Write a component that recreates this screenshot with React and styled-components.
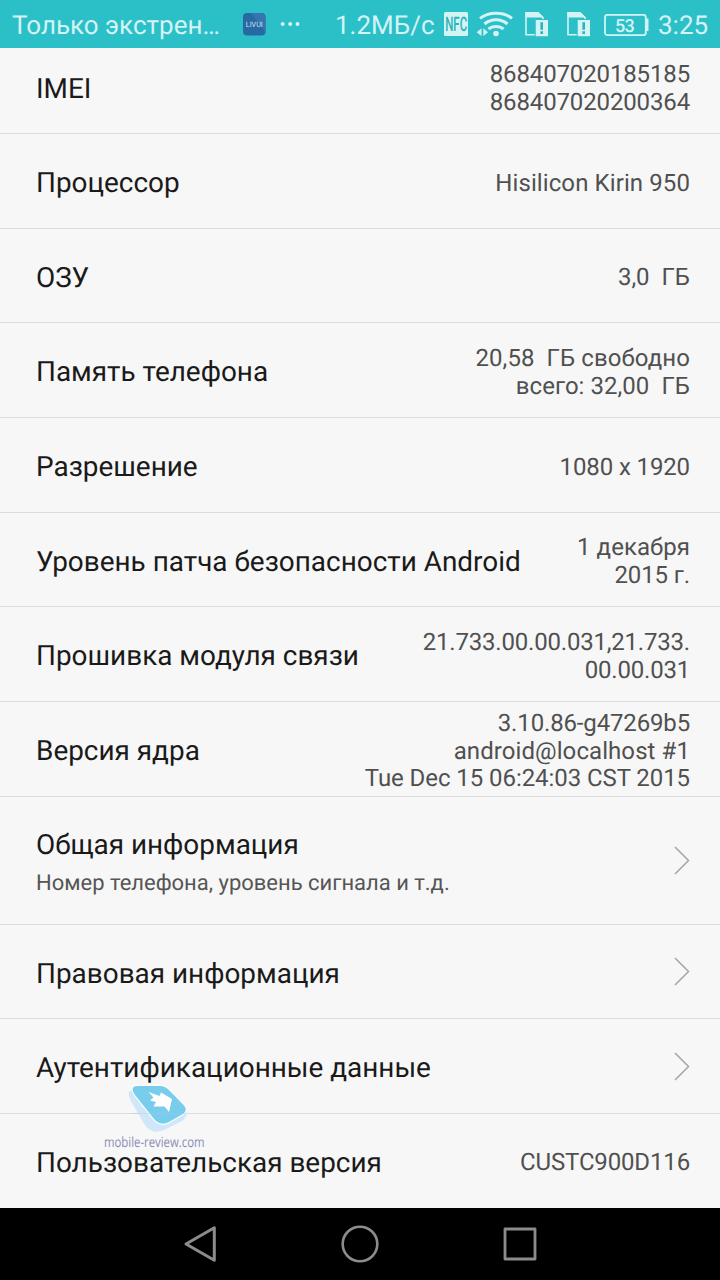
import React from 'react';
import styled, { createGlobalStyle } from 'styled-components';

const GlobalStyle = createGlobalStyle`
  * {
    box-sizing: border-box;
  }

  body {
    margin: 0;
    background: #f7f7f7;
    font-family: Roboto, 'Noto Sans', sans-serif;
    text-rendering: geometricPrecision;
  }
`;

const Screen = styled.div`
  position: relative;
  display: flex;
  flex-direction: column;
  width: 720px;
  height: 1280px;
  overflow: hidden;
  background: #f7f7f7;
`;

const StatusBar = styled.header`
  display: flex;
  align-items: center;
  flex: none;
  height: 48px;
  padding-left: 12px;
  background: #2bc0c8;
  color: #d3f3f5;
  font-size: 26px;
  line-height: 46px;
  white-space: pre;

  svg {
    display: block;
    flex: none;
    overflow: visible;
  }
`;

const StatusText = styled.span`
  flex: none;
  width: ${props => props.$width}px;
  padding-top: 4px;
`;

const List = styled.main`
  flex: none;
  height: 1160px;
`;

const Row = styled.div`
  display: flex;
  align-items: center;
  justify-content: space-between;
  height: ${props => props.$height || 94.667}px;
  padding: 0 30px ${props => props.$bottom || 0}px 36px;
  border-bottom: 1px solid ${props => (props.$last ? 'transparent' : '#dcdcdc')};

  svg {
    margin-top: 1px;
  }
`;

const Label = styled.div`
  padding-top: 4.4px;
  color: #1a1a1a;
  font-size: 27.92px;
  line-height: 34px;
  white-space: nowrap;
`;

const Summary = styled.div`
  margin-top: 8px;
  margin-bottom: -1px;
  color: #555;
  font-size: 21.97px;
  line-height: 28px;
`;

const Value = styled.div`
  padding-top: 5.4px;
  color: #505050;
  font-size: 24px;
  line-height: 27.8px;
  text-align: right;
  white-space: pre;
`;

const Line = styled.div`
  letter-spacing: ${props => props.$spacing || 0}px;
`;

const NavBar = styled.footer`
  display: flex;
  justify-content: center;
  align-items: center;
  gap: 120px;
  flex: none;
  height: 72px;
  background: #000;
`;

const Watermark = styled.div`
  position: absolute;
  left: 100px;
  top: 1082px;
  width: 110px;

  svg {
    display: block;
    overflow: visible;
  }
`;

// value: list of [text, letter spacing]
const rows = [
  { label: 'IMEI', value: [['868407020185185', -0.14], ['868407020200364', -0.14]], height: 86, bottom: 8 },
  { label: 'Процессор', value: [['Hisilicon Kirin 950', 0.1]] },
  { label: 'ОЗУ', value: [['3,0  ГБ']] },
  { label: 'Память телефона', value: [['20,58  ГБ свободно', 0.08], ['всего: 32,00  ГБ', 0.05]] },
  { label: 'Разрешение', value: [['1080 x 1920', -0.12]] },
  { label: 'Уровень патча безопасности Android', value: [['1 декабря', 0.06], ['2015 г.', -0.1]] },
  { label: 'Прошивка модуля связи', value: [['21.733.00.00.031,21.733.', -0.2], ['00.00.031', -0.2]] },
  {
    label: 'Версия ядра',
    value: [['3.10.86-g47269b5', -0.15], ['android@localhost #1', 0.08], ['Tue Dec 15 06:24:03 CST 2015', -0.07]],
  },
  { label: 'Общая информация', summary: 'Номер телефона, уровень сигнала и т.д.', height: 128, link: true },
  { label: 'Правовая информация', link: true },
  { label: 'Аутентификационные данные', link: true },
  { label: 'Пользовательская версия', value: [['CUSTC900D116', -0.15]], height: 94.333 },
];

const Chevron = () => (
  <svg width="18" height="30" viewBox="0 0 18 30" fill="none" stroke="#a6a6a6" strokeWidth="1.5">
    <path d="M3 1 16.5 14.5 3 28" />
  </svg>
);

// Launcher notification, the overflow dots follow it
const AppNotification = () => (
  <svg width="92" height="48" viewBox="0 0 92 48">
    <rect x="0" y="13" width="22.5" height="22.5" rx="4" fill="#2869a3" />
    <path d="M8 13h10.5a4 4 0 0 1 4 4v15Z" fill="#3576ae" />
    <text x="2.8" y="27.3" fill="#c7e5f5" fontSize="7.5" textLength="17" lengthAdjust="spacingAndGlyphs">LIVUI</text>
    <g fill="#d3f3f5">
      <circle cx="39.7" cy="24" r="2" />
      <circle cx="47.2" cy="24" r="2" />
      <circle cx="54.5" cy="24" r="2" />
    </g>
  </svg>
);

const NfcIcon = () => (
  <svg width="33" height="48" viewBox="0 0 33 48">
    <rect x="0" y="12" width="24" height="24" rx="1.5" fill="#d3f3f5" />
    <text x="1.2" y="31.3" fill="#2bb3bb" fontSize="20" fontWeight="500" textLength="22" lengthAdjust="spacingAndGlyphs">NFC</text>
  </svg>
);

const WifiIcon = () => (
  <svg width="48" height="48" viewBox="477 0 48 48" fill="none" stroke="#d3f3f5" strokeWidth="3">
    <path d="M480 18.5C488 11.4 504 11.4 512 18.5" />
    <path d="M484.5 24C491 18.3 501 18.3 507.5 24" />
    <path d="M488.5 29.2C492.5 25.6 499.5 25.6 503.5 29.2" />
    <circle cx="496" cy="33.5" r="2.8" fill="#d3f3f5" stroke="none" />
    <path d="M476.7 32.2 481.5 28.3V36ZM488 32.2 483.3 28.3V36Z" fill="#d3f3f5" stroke="none" />
  </svg>
);

const SimIcon = ({ width }) => (
  <svg width={width} height="48" viewBox={`0 0 ${width} 48`}>
    <path d="M1 12.8H13L18 17.5V34.7H1Z" fill="none" stroke="#d3f3f5" strokeWidth="1.6" />
    <path d="M.5 12H13.2L18.5 17.5H.5Z" fill="#d3f3f5" />
    <path d="M10.2 19.5H23.5V36.8H10.2Z" fill="#d3f3f5" stroke="#2bc0c8" strokeWidth="1" />
    <path d="M16.7 22.3V29.8M16.7 31.3V34" stroke="#2bb3bb" strokeWidth="2.6" />
  </svg>
);

const BatteryIcon = () => (
  <svg width="54" height="48" viewBox="0 0 54 48">
    <rect x="1" y="14.8" width="40.8" height="20.4" rx="2.5" fill="none" stroke="#d3f3f5" strokeWidth="1.8" />
    <path d="M42 18.5h2.5v12.5H42Z" fill="#d3f3f5" />
    <text x="11" y="31.5" fill="#d3f3f5" fontSize="18" fontWeight="500" textLength="19.8">53</text>
  </svg>
);

const BackIcon = () => (
  <svg width="40" height="40" viewBox="0 0 40 40" fill="none" stroke="#8c8c8c" strokeWidth="3" strokeLinejoin="round">
    <path d="M34.3 3.8V36.2L6 20Z" />
  </svg>
);

const HomeIcon = () => (
  <svg width="40" height="40" viewBox="0 0 40 40" fill="none" stroke="#8c8c8c" strokeWidth="2.6">
    <circle cx="20" cy="20" r="17.3" />
  </svg>
);

const RecentIcon = () => (
  <svg width="40" height="40" viewBox="0 0 40 40" fill="none" stroke="#8c8c8c" strokeWidth="2.8" strokeLinejoin="round">
    <path d="M5 5H35V35H5Z" />
  </svg>
);

const App = () => {
  return (
    <>
      <GlobalStyle />
      <Screen>
        <StatusBar>
          <StatusText $width={231}>Только экстрен…</StatusText>
          <AppNotification />
          <StatusText $width={109}>1.2МБ/с</StatusText>
          <NfcIcon />
          <WifiIcon />
          <SimIcon width={42} />
          <SimIcon width={37} />
          <BatteryIcon />
          <StatusText $width={56}>3:25</StatusText>
        </StatusBar>
        <List>
          {rows.map((row, i) => (
            <Row key={row.label} $height={row.height} $bottom={row.bottom} $last={i === rows.length - 1}>
              <Label>
                {row.label}
                {row.summary && <Summary>{row.summary}</Summary>}
              </Label>
              {row.value && (
                <Value>
                  {row.value.map(([text, spacing]) => (
                    <Line key={text} $spacing={spacing}>{text}</Line>
                  ))}
                </Value>
              )}
              {row.link && <Chevron />}
            </Row>
          ))}
        </List>
        <NavBar>
          <BackIcon />
          <HomeIcon />
          <RecentIcon />
        </NavBar>
        <Watermark>
          <svg width="110" height="72" viewBox="0 0 110 72">
            <path d="M29 9Q28 14 31 19L43 40Q51 54 64 48L82 39Q88 35 86 28L40 8Z" fill="#cfe7f8" />
            <path d="M38 4H60Q65 4 69 8L84 23.5Q88 28 83 32L68 40.5Q60 44 54 37L35 13Q29 4 38 4Z" fill="#79cdec" stroke="#fbfdff" strokeWidth="2.4" paintOrder="stroke" />
            <path d="M48.5 10 59.5 14 61 10.5 72 17 69 30 64.5 24.5 53.5 24.5 56 20 50 18.5 53.5 15.5Z" fill="#fff" />
            <path d="M32 31.5H86" stroke="#a9c9d9" strokeOpacity="0.4" />
            <text x="4" y="65" fill="#888cb5" fontFamily="'Open Sans', sans-serif" fontSize="14" textLength="100.5" lengthAdjust="spacingAndGlyphs">mobile-review.com</text>
          </svg>
        </Watermark>
      </Screen>
    </>
  );
};

export default App;
